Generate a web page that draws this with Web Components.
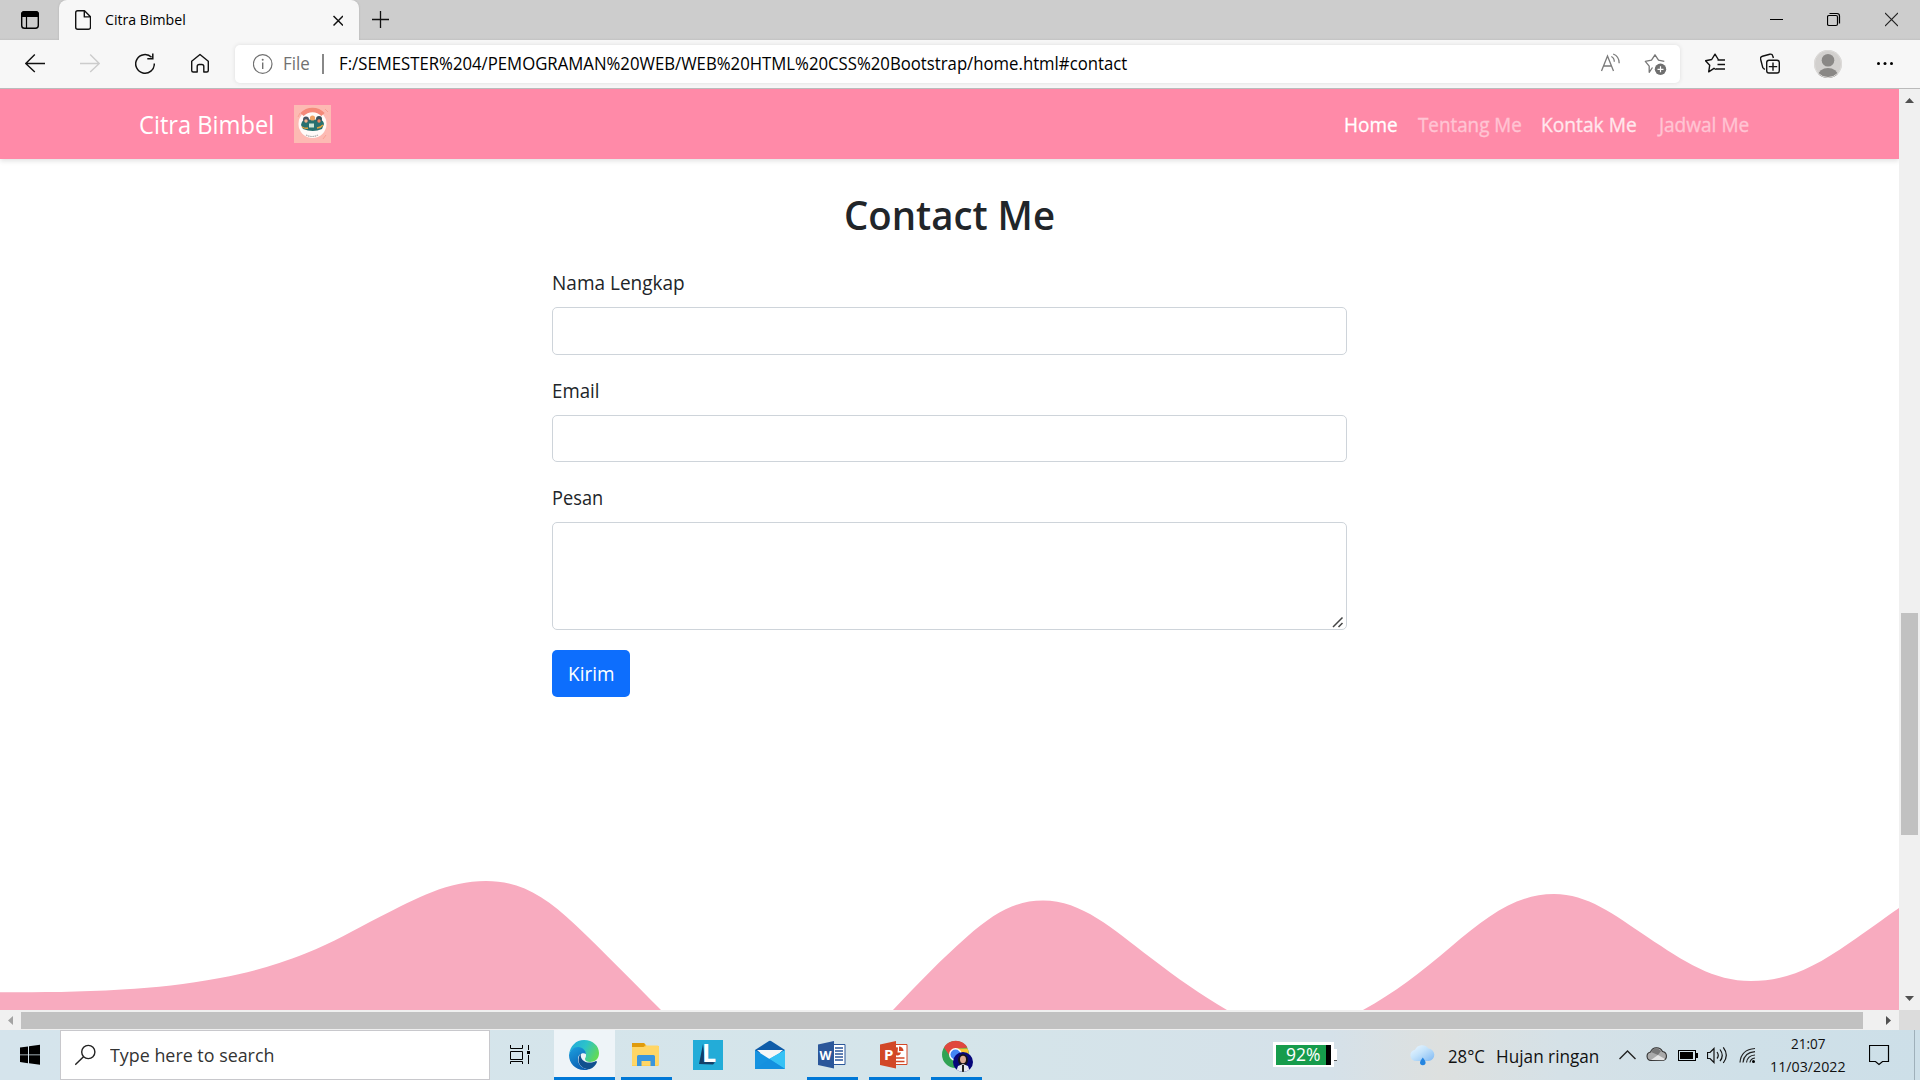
<!DOCTYPE html>
<html lang="id">
<head>
<meta charset="utf-8">
<title>Citra Bimbel</title>
<style>
html,body{margin:0;height:100%;overflow:hidden;font-family:"Open Sans","Noto Sans",sans-serif}
</style>
</head>
<body>
<desk-top></desk-top>
<script>
// name: [x, y, width, height, drawing]
const ICONS = {
tabs:[21,0,18,40,'<path d="M21 17v-2.500a3.500 3.500 0 0 1 3.500-3.500h11a3.500 3.500 0 0 1 3.500 3.500V17z"/><rect x="21.700" y="11.700" width="16.600" height="16.600" rx="2.800" fill="none" stroke="#000" stroke-width="1.400"/><path d="M26.500 16v12.500" stroke="#000" stroke-width="1.200"/>'],
file:[75,0,16,40,'<path d="M77.700 10.700h6.800l6 6v10.600a2 2 0 0 1-2 2H77.700a2 2 0 0 1-2-2V12.700a2 2 0 0 1 2-2zM84.300 10.900v6h6" fill="none" stroke="#111" stroke-width="1.400" stroke-linejoin="round"/>'],
tabx:[333,0,10,40,'<path d="M333.500 16l9.500 9.500M343 16l-9.500 9.500" stroke="#111" stroke-width="1.500"/>'],
plus:[372,0,17,40,'<path d="M372 19.500h17M380.500 11v17" stroke="#111" stroke-width="1.300"/>'],
min:[1770,0,13,40,'<path d="M1770 19.500h13" stroke="#000"/>'],
restore:[1827,0,14,40,'<rect x="1827.500" y="15.500" width="10" height="10" rx="1.500" fill="none" stroke="#000" stroke-width="1.200"/><path d="M1829.500 13.500h7.500a2.500 2.500 0 0 1 2.500 2.500v7.500" fill="none" stroke="#000" stroke-width="1.200"/>'],
winx:[1885,0,13,40,'<path d="M1885 13l13 13M1898 13l-13 13" stroke="#222" stroke-width="1.100"/>'],
back:[25,40,20,48,'<path d="M45 63.500H25.800M34.800 54.500l-9 9 9 8.500" fill="none" stroke="#111" stroke-width="1.400"/>'],
fwd:[80,40,20,48,'<path d="M80 63.500h19.200M90.200 54.500l9 9-9 8.500" fill="none" stroke="#ccc" stroke-width="1.400"/>'],
reload:[135,40,20,48,'<path d="M151.600 57.300A9.300 9.300 0 1 0 154.300 63.500M152.800 53.500v5.200h-5.500" fill="none" stroke="#111" stroke-width="1.500"/>'],
home:[190,40,20,48,'<path d="M191.700 61.200l8.300-6.700 8.300 6.700v9.300a1.500 1.500 0 0 1-1.500 1.500h-3v-5.500a2 2 0 0 0-2-2h-2.600a2 2 0 0 0-2 2v5.500h-4a1.500 1.500 0 0 1-1.500-1.500z" fill="none" stroke="#111" stroke-width="1.400" stroke-linejoin="round"/>'],
info:[253,45,20,38,'<circle cx="262.700" cy="64" r="9.300" fill="none" stroke="#717171" stroke-width="1.200"/><path d="M262.700 62.500v6.500" stroke="#717171" stroke-width="1.400"/><circle cx="262.700" cy="59.800" r="1" fill="#717171"/>'],
read:[1600,45,21,38,'<path d="M1601.500 71l6-15 6 15M1603.500 66h8M1611.300 56.500c2 .900 3 2.600 3 5.300M1613.200 54c3.800 1.500 6 4.500 6 9.200" fill="none" stroke="#7a7a7a" stroke-width="1.300"/>'],
staradd:[1644,45,23,38,'<path d="M1652.500 67.500l-3.300 4.800 0-6.200-3.900-4.700 6.200-1.200 3.500-5.400 3.500 5.400 5.800 1.200" fill="none" stroke="#777" stroke-width="1.300" stroke-linejoin="round"/><circle cx="1660.500" cy="69.300" r="5.700" fill="#6f6f6f"/><path d="M1657.500 69.300h6M1660.500 66.300v6" stroke="#fff" stroke-width="1.200"/>'],
fav:[1705,40,20,48,'<path d="M1716 69.500l-2-1.200-5.300 3.500 1-6.500-4.200-4.500 6.200-1.300 3.300-5.300 3.300 5.300M1717.500 60h7.500M1717.500 64.500h7.500M1716 69h9" fill="none" stroke="#111" stroke-width="1.400" stroke-linejoin="round"/>'],
coll:[1760,40,20,48,'<path d="M1764.800 69.500l-2-1.800-2.200-8.500a2.500 2.500 0 0 1 1.800-3l7.400-2a2.500 2.500 0 0 1 3 1.800l.600 2" fill="none" stroke="#111" stroke-width="1.400"/><rect x="1766.700" y="60.200" width="12.600" height="12.800" rx="2.300" fill="none" stroke="#111" stroke-width="1.400"/><path d="M1768.800 66.600h8.400M1773 62.400v8.400" stroke="#111" stroke-width="1.400"/>'],
avatar:[1814,40,28,48,'<clipPath id="a"><circle cx="1828" cy="64" r="14"/></clipPath><g clip-path="url(#a)"><path d="M1814 50h28v28h-28z" fill="#d2d0ce"/><circle cx="1828" cy="60.300" r="6.300" fill="#8a8886"/><ellipse cx="1828" cy="76" rx="10" ry="8" fill="#8a8886"/></g><circle cx="1828" cy="64" r="13.500" fill="none" stroke="#dedcda"/>'],
dots:[1876,40,18,48,'<circle cx="1878.500" cy="63.500" r="1.500"/><circle cx="1885" cy="63.500" r="1.500"/><circle cx="1891.500" cy="63.500" r="1.500"/>'],
logo:[294,105,37,38,'<path d="M294 105h37v38h-37z" fill="#fdbab3"/><circle cx="312.500" cy="124" r="14" fill="#fffaf8"/><path d="M302 114.500a14.500 14.500 0 0 1 21 0" fill="none" stroke="#f58a7a" stroke-width="4.500"/><path d="M298 117l2-4M325 109l3 3M323 139l3-4" stroke="#f79a8c" stroke-width=".8"/><path d="M301 125q1-6 6-5l5-1 6 1q5-1 6 4l-2 5q-9 4-19 0z" fill="#28706f"/><circle cx="306" cy="119.500" r="3" fill="#4a5663"/><circle cx="312.500" cy="118" r="2.600" fill="#f0a265"/><circle cx="319" cy="119" r="3" fill="#37505c"/><circle cx="306" cy="121" r="1.700" fill="#f5b78d"/><circle cx="319" cy="121" r="1.700" fill="#eb8560"/><path d="M309 123.500h5v4h-5z" fill="#cfe5d5"/><path d="M302 127q3 2 6 1M317 128q4-.5 6-3" stroke="#e5a13b" stroke-width="1.500" fill="none"/><path d="M306 135q6 3 12 0" fill="none" stroke="#aaa" stroke-width="1.200" stroke-dasharray="1.500 .7"/>'],
win:[20,1030,20,50,'<path d="M20 1047.500l8-1.100v8H20zM29 1046.200l11-1.400v9.600H29zM20 1055.200h8v8l-8-1.100zM29 1055.200h11v9.600l-11-1.500z"/>'],
find:[75,1030,21,50,'<circle cx="88.300" cy="1052" r="6.600" fill="none" stroke="#222" stroke-width="1.400"/><path d="M83.500 1056.800l-8.300 8" stroke="#222" stroke-width="1.500"/>'],
view:[510,1030,21,50,'<path d="M510.500 1045v3.500h12V1045M510.500 1051.500h12v8h-12zM510.500 1064v-2.500h12v2.500M528.500 1045v5M528.500 1055v9" fill="none" stroke="#000"/><path d="M527 1051h3v3h-3z"/>'],
edge:[568,1030,32,50,'<defs><linearGradient id="e1" x1="0" x2="1" y1=".2" y2=".6"><stop stop-color="#22a9dc"/><stop offset=".5" stop-color="#2cc3c9"/><stop offset="1" stop-color="#63da54"/></linearGradient><linearGradient id="e2" x1="0" x2=".5" y1="0" y2="1"><stop stop-color="#1ca0df"/><stop offset="1" stop-color="#0b5fb2"/></linearGradient></defs><path d="M569 1055c1-9 7-15 15-15 9 0 15 6 15 13 0 6-4 9-9 9-3 0-5-1-5-3 0-1 1-1 1-4 0-4-4-7-8-7-5 0-8 3-9 7z" fill="url(#e1)"/><path d="M569 1055c1-5 5-8 9-8 5 0 8 4 8 7-3-2-8 0-8 5 0 6 5 11 12 10-2 1-4 1-6 1-9 0-15-7-15-15z" fill="url(#e2)"/><path d="M581 1053c-6 8 0 17 9 16 3-1 6-4 7-7 0-1-1-1-1-1-8 4-17 0-15-8z" fill="#11508f"/>'],
folder:[632,1030,28,50,'<path d="M632 1044q0-1 1-1h11l3 3h12v18q0 2-1.500 2H632z" fill="#ffc83d"/><path d="M632 1047h13l2-1.500h10.500q1.500 0 1.500 1.500V1064q0 1.500-1.500 1.500H632z" fill="#ffd666"/><path d="M632 1043h12l1.500 2-2 2H632z" fill="#e09b0c"/><path d="M637 1066v-9.500q0-1.500 1.500-1.500h15q1.500 0 1.500 1.500v9.500h-4.500v-5h-9v5z" fill="#3a96dd"/>'],
l:[693,1030,30,50,'<path d="M693 1040h30v30h-30z" fill="#23acd8"/><path d="M703 1044l-4 20 14 .5 2-2-10-2z" fill="#123f68"/><text x="702" y="1062" font-family="Open Sans" font-weight="700" font-size="25" fill="#fff">L</text>'],
mail:[755,1030,30,50,'<path d="M755 1050l14-9q1-.6 2 0l14 9v3h-30z" fill="#0f5ca8"/><path d="M757 1050h26l-11 10h-4z" fill="#f7f7f7"/><path d="M755 1050l14.500 9 15.500-9v18q0 1-1 1h-29z" fill="#1693e0"/><path d="M785 1050v19l-16-10z" fill="#36c2f5"/><path d="M755 1069l14.500-10 15.500 10z" fill="#1490df"/>'],
word:[818,1030,28,50,'<path d="M832 1044.500h13v20h-13z" fill="#fff" stroke="#2b579a"/><path d="M835 1048h8M835 1051h8M835 1054h8M835 1057h8M835 1060h8" stroke="#2b579a" stroke-width="1.400"/><path d="M818 1044.500l16-3.500v27.500l-16-3.500z" fill="#2b579a"/><text x="819.500" y="1060" font-family="Open Sans" font-weight="700" font-size="13" textLength="12" lengthAdjust="spacingAndGlyphs" fill="#fff">W</text>'],
ppt:[880,1030,28,50,'<path d="M894 1044.500h13v20h-13z" fill="#fff" stroke="#d24726"/><path d="M895 1058h9.500M895 1061.500h9.500" stroke="#d24726" stroke-width="1.500"/><path d="M898 1047.500a4 4 0 1 0 3 5h-3.500z" fill="#d24726"/><path d="M899 1046.500a4.500 4.500 0 0 1 4.500 4.500H899z" fill="#d24726"/><path d="M880 1044.500l16-3.500v27.500l-16-3.500z" fill="#d24726"/><text x="884" y="1060" font-family="Open Sans" font-weight="700" font-size="15" fill="#fff">P</text>'],
chrome:[942,1030,31,50,'<circle cx="955.500" cy="1054.500" r="13.500" fill="#31a354"/><path d="M944 1047.500a13.500 13.500 0 0 1 23.500 0l-12 1.500-5 8z" fill="#e0473e"/><path d="M955 1048.500h12.500a13.500 13.500 0 0 1-11 19.500z" fill="#fbc834"/><circle cx="955.500" cy="1054.500" r="6.500" fill="#fff"/><circle cx="955.500" cy="1054.500" r="5" fill="#4285f4"/><clipPath id="c"><circle cx="963" cy="1062" r="10"/></clipPath><g clip-path="url(#c)"><path d="M953 1052h20v20h-20z" fill="#06067a"/><ellipse cx="963" cy="1060" rx="5" ry="6" fill="#17131a"/><ellipse cx="963" cy="1059.500" rx="3" ry="3.700" fill="#dcaa94"/><path d="M956 1072l2-6 5-2 5 2 2 6z" fill="#e8eaf0"/><path d="M962 1065h2v7h-2z" fill="#222"/></g>'],
batt:[1273,1030,64,50,'<path d="M1273 1042h61v7h3v12h-3v6h-61z" fill="#fff"/><path d="M1276 1045h50v20h-50z" fill="#169c4c"/><path d="M1326 1045h5v20h-5z"/><path d="M1334 1060.500h3" stroke="#555"/>'],
cloud:[1410,1030,25,50,'<defs><linearGradient id="w" x1="0" y1="0" x2="1" y2="1"><stop stop-color="#f0f9ff"/><stop offset=".45" stop-color="#c4e3fb"/><stop offset="1" stop-color="#7fb8f2"/></linearGradient></defs><path d="M1416 1061a5.700 5.700 0 0 1-1-11.300 7.800 7.800 0 0 1 13.500-1.200 6.300 6.300 0 0 1 .5 12.500z" fill="url(#w)"/><path d="M1422.800 1057.500q-2.800 3.500-2.800 5a2.800 2.800 0 0 0 5.600 0q0-1.500-2.800-5z" fill="#2585e0"/>'],
up:[1619,1030,17,50,'<path d="M1619.500 1059l8-8 8 8" fill="none" stroke="#222" stroke-width="1.400"/>'],
drive:[1646,1030,22,50,'<path d="M1651 1060.500a4.300 4.300 0 0 1-.5-8.500 6.500 6.500 0 0 1 12-.500 4.600 4.600 0 0 1 .500 9z" fill="#aaa" stroke="#333" stroke-width="1.100"/><path d="M1651 1060l7-5 7 4q-1 1.200-2 1.200z" fill="#e5e5e5"/><path d="M1651 1052q4-7 10-1l-3 4z" fill="#777"/>'],
power:[1678,1030,20,50,'<rect x="1678.500" y="1050.500" width="17" height="10" fill="none" stroke="#000"/><path d="M1680 1052h13v7h-13zM1696 1053h2v5h-2z"/>'],
sound:[1707,1030,21,50,'<path d="M1707.500 1052.500h2.500l4-4v14l-4-4h-2.500zM1717 1052q2.500 3.500 0 6.500M1720 1049.500q4.500 6 0 11.500M1723.300 1047.300q6 8 0 15.700" fill="none" stroke="#111" stroke-width="1.200"/>'],
wifi:[1739,1030,17,50,'<path d="M1740 1062.500q1-13 15-14M1743 1062.500q1-10 12-10.800M1746.500 1062.500q1-7 8.500-7.500M1750 1062.500q.5-4 5-4.500" fill="none" stroke="#222" stroke-width="1.200"/><circle cx="1753.500" cy="1061.500" r="1.500"/>'],
note:[1869,1030,21,50,'<path d="M1869.500 1045.500h19v16h-6l-3.500 3-3.500-3h-6z" fill="none" stroke="#000" stroke-width="1.200"/>'],
grip:[0,0,12,12,'<path d="M1 11L10.500 1.500M6.500 11l4-4" stroke="#444" stroke-width="1.500"/>']
};

// Shared base: fills an open shadow root with styles and markup.
class Base extends HTMLElement {
  constructor(){ super(); this.attachShadow({mode:'open'}); }
  render(css, html){ this.shadowRoot.innerHTML = `<style>*{box-sizing:border-box}:host{box-sizing:border-box}${css}</style>${html}`; }
}

class UiIcon extends Base {
  connectedCallback(){
    const [x,y,w,h,d] = ICONS[this.getAttribute('name')];
    this.render(`:host{display:block;flex:none;width:${w}px;height:${h}px}svg{display:block}`,
      `<svg width="${w}" height="${h}" viewBox="${x} ${y} ${w} ${h}">${d}</svg>`);
  }
}

// One line of text whose visible glyphs span exactly the given width.
class FitText extends Base {
  connectedCallback(){
    const w = +this.getAttribute('w');
    this.render(`:host{display:block;flex:none;width:${w}px;white-space:nowrap}span{display:inline-block;transform-origin:0 50%}`, `<span><slot></slot></span>`);
    const cs = getComputedStyle(this), ctx = document.createElement('canvas').getContext('2d');
    ctx.font = `${cs.fontWeight} ${cs.fontSize} ${cs.fontFamily}`;
    const m = ctx.measureText(this.textContent.trim());
    const s = w / (m.actualBoundingBoxLeft + m.actualBoundingBoxRight);
    this.shadowRoot.querySelector('span').style.transform = `translateX(${m.actualBoundingBoxLeft*s}px) scaleX(${s})`;
  }
}

class TabStrip extends Base {
  connectedCallback(){ this.render(`
    :host{display:flex;height:40px;background:linear-gradient(#cdcdcd 38px,#c2c2c2);font-size:15px;line-height:40px;flex:none}
    .tab{display:flex;width:300px;height:40px;background:#f7f7f7;border-radius:8px 8px 0 0;box-shadow:0 0 2px #aaa;margin-left:20px;line-height:39px}
    .gap{flex:1}`,
    `<ui-icon name="tabs" style="margin-left:21px"></ui-icon>
     <div class="tab"><ui-icon name="file" style="margin-left:16px"></ui-icon><fit-text w="80" style="margin-left:14px">Citra Bimbel</fit-text><ui-icon name="tabx" style="margin-left:148px"></ui-icon></div>
     <ui-icon name="plus" style="margin-left:13px"></ui-icon><div class="gap"></div>
     <ui-icon name="min"></ui-icon><ui-icon name="restore" style="margin-left:44px"></ui-icon><ui-icon name="winx" style="margin:0 22px 0 44px"></ui-icon>`); }
}

class ToolBar extends Base {
  connectedCallback(){ this.render(`
    :host{display:flex;flex:none;align-items:center;height:49px;background:#f7f7f7;border-bottom:1px solid #bbb;font-size:17.5px;line-height:36px;position:relative}
    .address{display:flex;align-items:center;width:1445px;height:38px;margin:0 25px;background:#fff;border-radius:5px;box-shadow:0 0 4px #ddd}
    fit-text{height:38px}
    .bar{width:1.5px;height:20px;background:#888;margin:0 16px 0 13px}.gap{flex:1}`,
    `<ui-icon name="back" style="margin-left:25px"></ui-icon><ui-icon name="fwd" style="margin-left:35px"></ui-icon><ui-icon name="reload" style="margin-left:35px"></ui-icon><ui-icon name="home" style="margin-left:35px"></ui-icon>
     <div class="address"><ui-icon name="info" style="margin:0 11px 0 18px"></ui-icon><fit-text w="25" style="color:#717171">File</fit-text><div class="bar"></div><fit-text w="787">F:/SEMESTER%204/PEMOGRAMAN%20WEB/WEB%20HTML%20CSS%20Bootstrap/home.html#contact</fit-text>
     <div class="gap"></div><ui-icon name="read"></ui-icon><ui-icon name="staradd" style="margin:0 13px 0 23px"></ui-icon></div>
     <ui-icon name="fav"></ui-icon><ui-icon name="coll" style="margin-left:35px"></ui-icon><ui-icon name="avatar" style="margin-left:34px"></ui-icon><ui-icon name="dots" style="margin-left:34px"></ui-icon>`); }
}

class SiteNav extends Base {
  connectedCallback(){ this.render(`
    :host{display:flex;flex:none;align-items:center;height:70px;padding:0 150px 0 140px;background:#ff8aa8;color:#fff;font-size:20px;line-height:70px;box-shadow:0 2px 5px rgba(0,0,0,.12)}
    .brand{font-size:25px;margin-right:21px}nav{display:flex;gap:20.500px;margin-left:auto;font-weight:500;line-height:72px;height:70px;-webkit-text-stroke:.3px}
    .dim{opacity:.5}.mid{opacity:.8}`,
    `<fit-text class="brand" w="133">Citra Bimbel</fit-text><ui-icon name="logo"></ui-icon>
     <nav><fit-text w="52.500">Home</fit-text><fit-text class="dim" w="103.500">Tentang Me</fit-text><fit-text class="mid" w="94.500" >Kontak Me</fit-text><fit-text class="dim" w="92">Jadwal Me</fit-text></nav>`); }
}

class FormField extends Base {
  connectedCallback(){
    const area = this.hasAttribute('area');
    this.render(`
    :host{display:block;margin-bottom:20px}
    .label{height:30px;line-height:32px;margin:0 0 10px .8px}
    .box{position:relative}.grip{position:absolute;right:3px;bottom:2px}
    input,textarea{display:block;width:100%;height:47.5px;border:1px solid #ced4da;border-radius:5px;background:#fff;outline:0;margin:0;padding:0 15px}
    textarea{height:108px;resize:none}`,
    `<fit-text class="label" w="${this.getAttribute('w')}">${this.getAttribute('label')}</fit-text><div class="box">` + (area?'<textarea></textarea><ui-icon class="grip" name="grip"></ui-icon>':'<input type="text">') + '</div>'); }
}

class ContactForm extends Base {
  connectedCallback(){ this.render(`
    :host{display:block;width:795px;margin:30.500px 0 0 552px;color:#212529;font-size:20px}
    h1{margin:0 0 29.500px;height:48px;display:flex;justify-content:center;font-size:40px;font-weight:600;line-height:49px}
    button{display:flex;justify-content:center;width:78px;height:47px;padding:0 1px 0 0;border:0;border-radius:5px;background:#0d6efd;color:#fff;font:inherit;line-height:47px}`,
    `<h1><fit-text w="208">Contact Me</fit-text></h1>
     <form-field label="Nama Lengkap" w="131.500"></form-field><form-field label="Email" w="45.500"></form-field><form-field area label="Pesan" w="49"></form-field>
     <button type="button"><fit-text w="44">Kirim</fit-text></button>`); }
}

class WaveFooter extends Base {
  connectedCallback(){
    // Curve nodes: x, y, slope
    const p = [[0,992.3,0],[122,989.5,-.06],[220,978,-.19],[306,953.3,-.39],[380,916.7,-.5],[486,881,0],[575.5,925,.95],[661,1010,1],[777,1075,0],[893,1010,-1.05],[967,936.7,-.88],[1043,900.5,0],[1151,958,.76],[1227,1010,.58],[1295,1030,0],[1363,1010,-.55],[1451,946.7,-.85],[1554,894,0],[1647,936.7,.67],[1751,981,0],[1849,943.3,-.7],[1899,908,-.7]];
    let d = `M0 ${p[0][1]}`;
    for(let i=1;i<p.length;i++){ const [x,y,s]=p[i-1],[X,Y,S]=p[i],h=(X-x)*.36;
      d += `C${x+h} ${y+h*s} ${X-h} ${Y-h*S} ${X} ${Y}`; }
    this.render(`:host{display:block;margin-top:auto}svg{display:block}`,
      `<svg width="1899" height="150" viewBox="0 860 1899 150"><path d="${d}V1100H0z" fill="#f8abbf"/></svg>`); }
}

class ScrollBar extends Base {
  connectedCallback(){
    const v = this.hasAttribute('vertical');
    this.render(v ? `:host{display:flex;flex-direction:column;width:21px;height:921px;background:#f0f0f0;padding:9px 0 9px 2px;flex:none}.thumb{width:17px;height:222px;background:#c1c1c1;margin:510px 0 auto}svg{display:block;margin-left:4px}`
      : `:host{display:flex;align-items:center;width:1899px;height:20px;background:#f0f0f0;flex:none}.thumb{width:1842px;height:17px;background:#c1c1c1;margin:1px 23px 0 8px}svg{flex:none}.first{margin-left:8px}`,
      v ? `<svg width="9" height="5"><path d="M0 5L4.500 0 9 5z" fill="#505050"/></svg><div class="thumb"></div><svg width="9" height="5"><path d="M0 0h9L4.500 5z" fill="#505050"/></svg>`
        : `<svg class="first" width="5" height="9"><path d="M5 0v9L0 4.500z" fill="#a3a3a3"/></svg><div class="thumb"></div><svg width="5" height="9"><path d="M0 0v9L5 4.500z" fill="#505050"/></svg>`); }
}

class TaskTile extends Base {
  connectedCallback(){ this.render(`
    :host{display:flex;flex:none;width:51px;height:50px;padding-left:11px;border-bottom:3px solid #0078d7}
    :host([active]){width:61px;padding-left:14px;background:#eef4f8}`,
    `<ui-icon name="${this.getAttribute('icon')}"></ui-icon>`); }
}

class TaskBar extends Base {
  connectedCallback(){ this.render(`
    :host{display:flex;flex:none;height:50px;background:linear-gradient(90deg,#d5e4ec 0,#d5e5ea 950px,#d5e1e9 1330px,#dde0df 1440px,#d5e1e7 1560px,#cfe0e8 1750px,#cddfe8);font-size:18.750px;line-height:50px;color:#111}
    .search{display:flex;width:430px;height:50px;background:#fff;border:1px solid #c8c8cc;margin:0 20px;color:#333;line-height:48px}
    .search ui-icon{margin:-1px 14px 0 14px}
    .meter{display:flex;width:64px;margin-left:291px}.meter ui-icon{margin-right:-51px}.meter fit-text{position:relative;color:#fff;font-size:17.500px;line-height:49px}
    .weather{line-height:51px}
    .clock{display:flex;flex-direction:column;align-items:center;width:74px;margin-left:15px;font-size:15px;line-height:23px;padding-top:2px}
    .edge{width:1px;height:50px;background:#9fb0ba;margin-left:24px}`,
    `<ui-icon name="win" style="margin-left:20px"></ui-icon>
     <div class="search"><ui-icon name="find"></ui-icon><fit-text w="163">Type here to search</fit-text></div>
     <ui-icon name="view"></ui-icon>
     <task-tile active icon="edge" style="margin-left:23px"></task-tile><task-tile icon="folder" style="margin-left:6px"></task-tile>
     <ui-icon name="l" style="margin-left:21px"></ui-icon><ui-icon name="mail" style="margin-left:32px"></ui-icon>
     <task-tile icon="word" style="margin-left:22px"></task-tile><task-tile icon="ppt" style="margin-left:11px"></task-tile><task-tile icon="chrome" style="margin-left:11px"></task-tile>
     <div class="meter"><ui-icon name="batt"></ui-icon><fit-text w="34">92%</fit-text></div>
     <ui-icon name="cloud" style="margin-left:73px"></ui-icon><fit-text class="weather" w="37" style="margin-left:13px">28°C</fit-text><fit-text class="weather" w="101" style="margin-left:12px">Hujan ringan</fit-text>
     <ui-icon name="up" style="margin-left:21px"></ui-icon><ui-icon name="drive" style="margin-left:10px"></ui-icon><ui-icon name="power" style="margin-left:10px"></ui-icon><ui-icon name="sound" style="margin-left:9px"></ui-icon><ui-icon name="wifi" style="margin-left:11px"></ui-icon>
     <div class="clock"><fit-text w="34">21:07</fit-text><fit-text w="74">11/03/2022</fit-text></div>
     <ui-icon name="note" style="margin-left:24px"></ui-icon><div class="edge"></div>`); }
}

class DeskTop extends Base {
  connectedCallback(){ this.render(`
    :host{display:flex;flex-direction:column;width:1920px;height:1080px;overflow:hidden;background:#fff;color:#000}
    .view{display:flex;height:921px;flex:none}.page{display:flex;flex-direction:column;width:1899px;height:921px;overflow:hidden;background:#fff}
    .foot{display:flex;height:20px;flex:none;background:#dcdcdc}`,
    `<tab-strip></tab-strip><tool-bar></tool-bar>
     <div class="view"><div class="page"><site-nav></site-nav><contact-form></contact-form><wave-footer></wave-footer></div><scroll-bar vertical></scroll-bar></div>
     <div class="foot"><scroll-bar></scroll-bar></div><task-bar></task-bar>`); }
}

for (const [n,c] of Object.entries({'ui-icon':UiIcon,'fit-text':FitText,'tab-strip':TabStrip,'tool-bar':ToolBar,'site-nav':SiteNav,'form-field':FormField,'contact-form':ContactForm,'wave-footer':WaveFooter,'scroll-bar':ScrollBar,'task-tile':TaskTile,'task-bar':TaskBar,'desk-top':DeskTop})) customElements.define(n,c);
</script>
</body>
</html>
